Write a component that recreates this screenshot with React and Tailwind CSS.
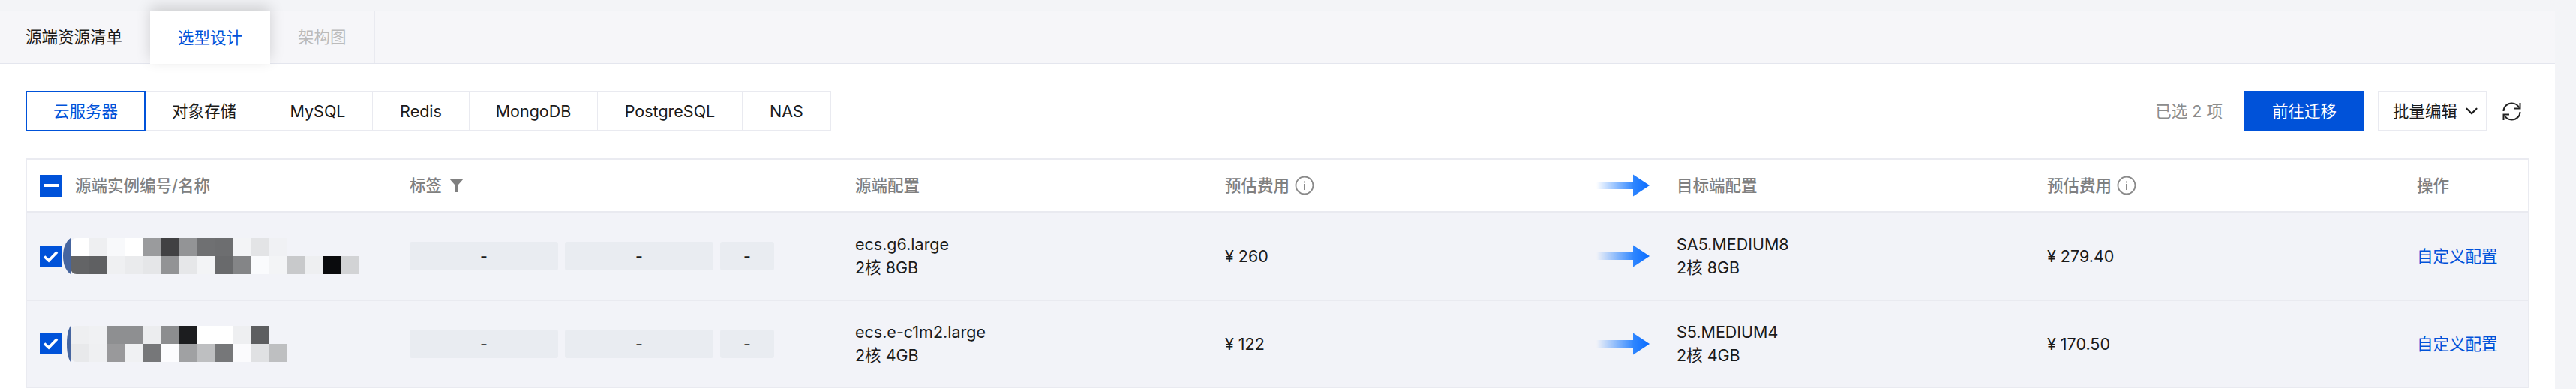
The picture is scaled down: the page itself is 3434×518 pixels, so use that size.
import { ChevronDown } from "lucide-react";

const rowGrid =
  "grid grid-cols-[493px_594px_493px_496px_106px_494px_493px_1fr] items-center pl-[17px]";

const segments = [
  { label: "云服务器", width: "w-[160px]", active: true },
  { label: "对象存储", width: "w-[157px]" },
  { label: "MySQL", width: "w-[146px]" },
  { label: "Redis", width: "w-[129px]" },
  { label: "MongoDB", width: "w-[171px]" },
  { label: "PostgreSQL", width: "w-[193px]" },
  { label: "NAS", width: "w-[118px]" },
];

const rows = [
  {
    id: "a",
    crescent: "M10 0 C3 5 0 14 0 24 C0 34 3 43 10 48 Z",
    crescentClass: "ml-[2px] h-[48px] w-[10px]",
    top: ["#ffffff", "#eeeff1", "#f8f9fb", "#ffffff", "#9a9b9d", "#414143", "#939496", "#6f7072", "#6d6e70", "#f3f4f6", "#e3e4e6", "#f0f1f4"],
    bottom: ["#636466", "#5f6062", "#eff0f2", "#eaebed", "#e5e6e8", "#929395", "#e6e7e9", "#f3f4f6", "#696a6c", "#848587", "#fafbfd", "#f3f4f6", "#c8c9cb", "#eeeff1", "#0a0b0d", "#d2d3d5"],
    source: "ecs.g6.large",
    sourceSpec: "2核 8GB",
    sourceCost: "¥ 260",
    target: "SA5.MEDIUM8",
    targetSpec: "2核 8GB",
    targetCost: "¥ 279.40",
  },
  {
    id: "b",
    crescent: "M10 0 C3 5 0 14 0 24 C0 34 3 43 10 48 Z",
    crescentClass: "ml-[7px] h-[48px] w-[5px]",
    top: ["#eeeff1", "#f0f1f3", "#8e8f91", "#8e8f91", "#ecedef", "#8c8d8f", "#1c1d1f", "#ffffff", "#ffffff", "#eeeff1", "#5d5e60"],
    bottom: ["#e8e9eb", "#eff0f2", "#99999b", "#f0f1f3", "#767779", "#fcfcfe", "#a0a1a3", "#bebfc1", "#767779", "#fbfbfd", "#e0e1e3", "#bebfc1"],
    source: "ecs.e-c1m2.large",
    sourceSpec: "2核 4GB",
    sourceCost: "¥ 122",
    target: "S5.MEDIUM4",
    targetSpec: "2核 4GB",
    targetCost: "¥ 170.50",
  },
];

function MigrateArrow() {
  return (
    <svg width="72" height="30" viewBox="0 0 72 30" className="-ml-px">
      <defs>
        <linearGradient id="arrow-fade" x1="0" x2="1" y1="0" y2="0">
          <stop offset="0" stopColor="#2f86ff" stopOpacity="0" />
          <stop offset="1" stopColor="#2f86ff" />
        </linearGradient>
        <linearGradient id="arrow-head" x1="0" x2="1" y1="0" y2="0">
          <stop offset="0" stopColor="#2f86ff" />
          <stop offset="1" stopColor="#0a6cff" />
        </linearGradient>
      </defs>
      <rect x="0" y="10" width="50" height="10" fill="url(#arrow-fade)" />
      <path d="M49 0.5 L71 15 L49 29.5 Z" fill="url(#arrow-head)" />
    </svg>
  );
}

function InfoIcon() {
  return (
    <svg width="26" height="26" viewBox="0 0 26 26" fill="none" className="ml-[7px]">
      <circle cx="13" cy="13" r="11.5" stroke="#8a8a8a" strokeWidth="1.8" />
      <rect x="12" y="11" width="2" height="8" fill="#8a8a8a" />
      <rect x="12" y="7.5" width="2" height="2" fill="#8a8a8a" />
    </svg>
  );
}

function FilterIcon() {
  return (
    <svg width="19" height="18" viewBox="0 0 19 18" className="ml-[10px]">
      <path d="M0 0 H19 L12 8 V18 H7 V8 Z" fill="#808080" />
    </svg>
  );
}

function RefreshIcon() {
  return (
    <svg width="25" height="25" viewBox="0 0 25 25" fill="none" stroke="#222222" strokeWidth="2" className="ml-[20px]">
      <path d="M1.5 12 C1.5 6 6.5 1.5 12.5 1.5 C17 1.5 20.5 4 22.5 7.5" />
      <path d="M23.5 1 V8.5 H16" />
      <path d="M23.5 13 C23.5 19 18.5 23.5 12.5 23.5 C8 23.5 4.5 21 2.5 17.5" />
      <path d="M1.5 24 V16.5 H9" />
    </svg>
  );
}

function Checkbox({ mixed }) {
  return (
    <span className="flex h-[29px] w-[29px] shrink-0 items-center justify-center bg-[#0052d9]">
      {mixed ? (
        <span className="h-[4px] w-[20px] bg-white" />
      ) : (
        <svg width="21" height="17" viewBox="0 0 21 17" fill="none">
          <path d="M2 8.5 L8 14 L19 2.5" stroke="white" strokeWidth="3.6" />
        </svg>
      )}
    </span>
  );
}

function Mosaic({ row }) {
  return (
    <div className="flex items-center">
      <svg viewBox="0 0 10 48" preserveAspectRatio="none" className={row.crescentClass}>
        <path d={row.crescent} fill="#46659f" />
      </svg>
      <div className="flex flex-col overflow-hidden rounded-l-[8px]">
        {[row.top, row.bottom].map((cells, index) => (
          <div key={index} className="flex h-[24px]">
            {cells.map((color, cellIndex) => (
              <span key={cellIndex} className="h-full w-[24px]" style={{ backgroundColor: color }} />
            ))}
          </div>
        ))}
      </div>
    </div>
  );
}

function Tag({ width }) {
  return (
    <span className={`flex h-[38px] items-center justify-center rounded-[3px] bg-[#e9ecf1] ${width}`}>
      -
    </span>
  );
}

export default function App() {
  return (
    <div
      className="h-[518px] w-[3434px] overflow-hidden bg-[#f3f4f7] pt-[15px] text-[21.5px] text-[#1a1a1a]"
      style={{ fontFamily: '"Inter", "Noto Sans CJK SC", sans-serif' }}
    >
      <div className="h-[503px] w-[3406px] bg-white">
        {/* Tabs */}
        <div className="flex h-[70px] border-b border-[#e4e6ee] bg-[#f6f6f9]">
          <div className="flex items-center pl-[34px] pr-[37px]">源端资源清单</div>
          <div className="z-10 -mb-px flex items-center bg-white px-[37px] text-[#0052d9] shadow-[0_-6px_18px_rgba(0,0,0,0.16)]">
            选型设计
          </div>
          <div className="flex items-center border-r border-[#e9eaf0] px-[37px] text-[#bbbbbb]">架构图</div>
        </div>

        {/* Toolbar */}
        <div className="flex items-center justify-between pl-[34px] pr-[45px] pt-[36px]">
          <div className="flex h-[54px]">
            {segments.map((segment) => (
              <div
                key={segment.label}
                className={
                  segment.active
                    ? `flex items-center justify-center border-2 border-[#0052d9] text-[#0052d9] ${segment.width}`
                    : `flex items-center justify-center border-y-2 border-r border-[#e9eaf0] ${segment.width}`
                }
              >
                {segment.label}
              </div>
            ))}
          </div>
          <div className="flex items-center">
            <span className="text-[#8c8c8c]">已选 2 项</span>
            <button type="button" className="ml-[29px] h-[54px] w-[160px] bg-[#0052d9] text-white">
              前往迁移
            </button>
            <button
              type="button"
              className="ml-[18px] flex h-[54px] w-[146px] items-center gap-[6px] border-2 border-[#e9eaf0] pl-[18px]"
            >
              批量编辑
              <ChevronDown size={26} strokeWidth={2} />
            </button>
            <RefreshIcon />
          </div>
        </div>

        {/* Table */}
        <div className="mx-[34px] mt-[36px] border-x-2 border-t-2 border-[#eaebf1]">
          <div className={`${rowGrid} h-[71px] border-b-[3px] border-[#e9eaf0] font-medium text-[#808080]`}>
            <div className="flex items-center gap-[18px]">
              <Checkbox mixed />
              源端实例编号/名称
            </div>
            <div className="flex items-center">
              标签
              <FilterIcon />
            </div>
            <div>源端配置</div>
            <div className="flex items-center">
              预估费用
              <InfoIcon />
            </div>
            <MigrateArrow />
            <div>目标端配置</div>
            <div className="flex items-center">
              预估费用
              <InfoIcon />
            </div>
            <div>操作</div>
          </div>

          {rows.map((row) => (
            <div key={row.id} className={`${rowGrid} h-[116.5px] border-b-2 border-[#e9eaf0] bg-[#f2f3f8]`}>
              <div className="flex items-center">
                <Checkbox />
                <Mosaic row={row} />
              </div>
              <div className="flex gap-[9px]">
                <Tag width="w-[198px]" />
                <Tag width="w-[198px]" />
                <Tag width="w-[72px]" />
              </div>
              <div className="leading-[31px]">
                <div>{row.source}</div>
                <div>{row.sourceSpec}</div>
              </div>
              <div>{row.sourceCost}</div>
              <MigrateArrow />
              <div className="leading-[31px]">
                <div>{row.target}</div>
                <div>{row.targetSpec}</div>
              </div>
              <div>{row.targetCost}</div>
              <div className="text-[#0052d9]">自定义配置</div>
            </div>
          ))}
        </div>
      </div>
    </div>
  );
}
